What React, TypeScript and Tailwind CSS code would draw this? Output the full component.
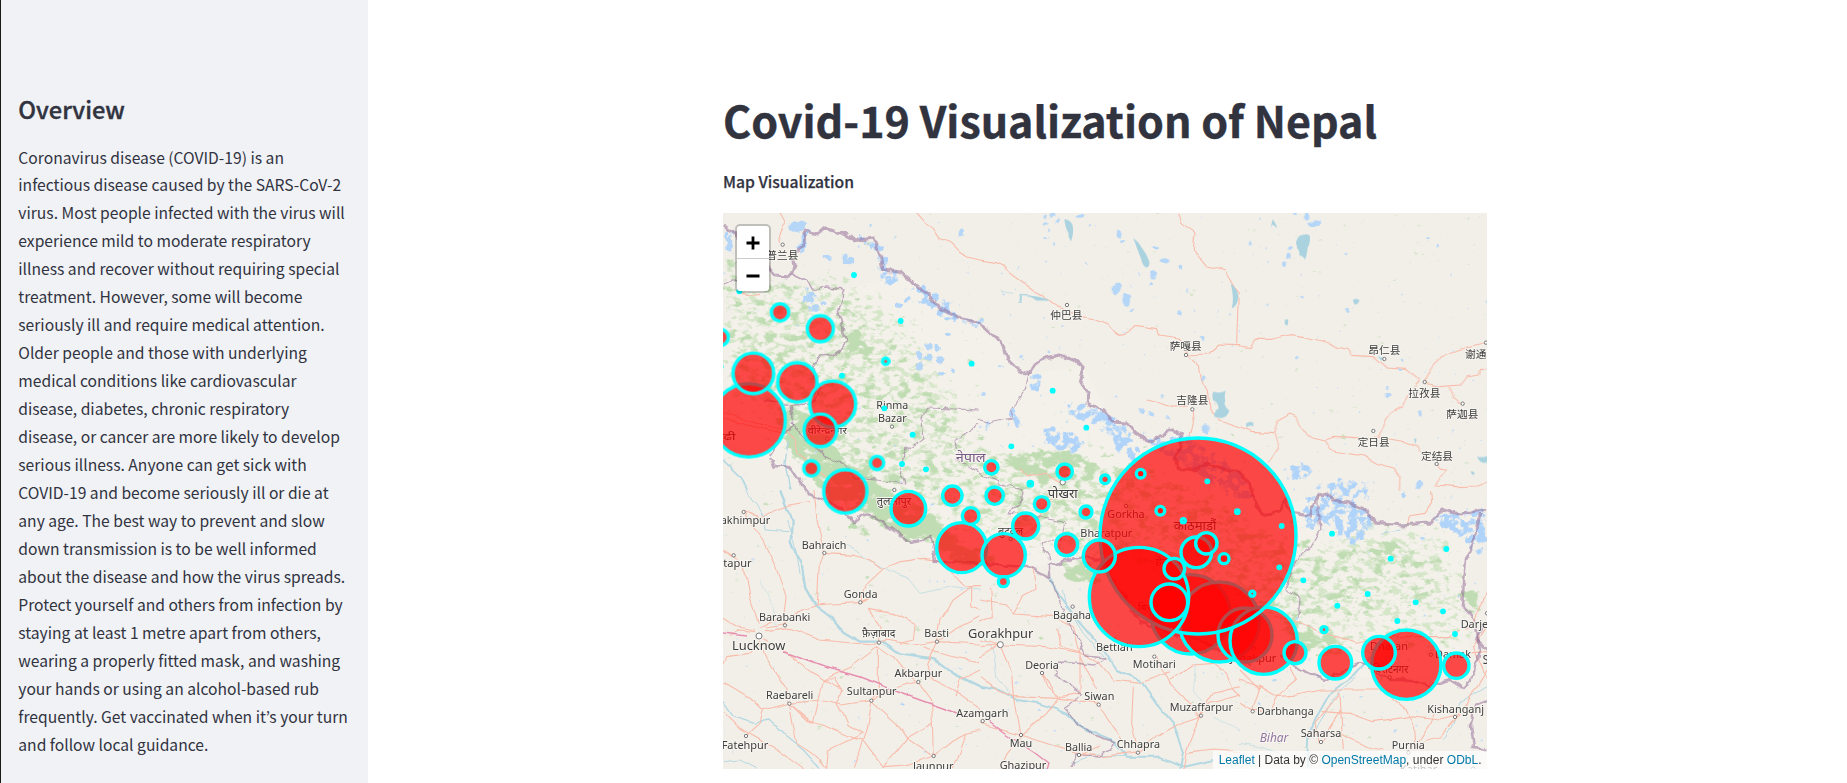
import React from "react";

const OVERVIEW = [
  "Coronavirus disease (COVID-19) is an",
  "infectious disease caused by the SARS-CoV-2",
  "virus. Most people infected with the virus will",
  "experience mild to moderate respiratory",
  "illness and recover without requiring special",
  "treatment. However, some will become",
  "seriously ill and require medical attention.",
  "Older people and those with underlying",
  "medical conditions like cardiovascular",
  "disease, diabetes, chronic respiratory",
  "disease, or cancer are more likely to develop",
  "serious illness. Anyone can get sick with",
  "COVID-19 and become seriously ill or die at",
  "any age. The best way to prevent and slow",
  "down transmission is to be well informed",
  "about the disease and how the virus spreads.",
  "Protect yourself and others from infection by",
  "staying at least 1 metre apart from others,",
  "wearing a properly fitted mask, and washing",
  "your hands or using an alcohol-based rub",
  "frequently. Get vaccinated when it’s your turn",
  "and follow local guidance.",
];

// Each tile has its own origin on the map and is drawn at three units per pixel.
type TileId = "A" | "B" | "C" | "D" | "E" | "F";
const TILES: Record<TileId, [number, number]> = {
  A: [720, 210], B: [980, 210], C: [1240, 210],
  D: [720, 490], E: [980, 490], F: [1240, 490],
};
const IDS: TileId[] = ["A", "B", "C", "D", "E", "F"];

const ROADS: Record<TileId, string[]> = {
  A: [
    "M180 8L195 35L178 70L182 98", "M590 8L618 40L640 55L660 85L690 98L720 128L745 142L780 150",
    "M9 605L60 625L110 640L200 660", "M200 660L225 685L235 730L280 770L320 800", "M9 625L80 645L190 670", "M60 250L90 255L120 250",
  ],
  B: [
    "M0 150L50 158L70 168L80 182L100 198L160 240L190 256L225 285L260 300L300 322L350 330L385 345L410 376L430 374L468 346L530 356L535 375L600 384L620 405L618 432",
    "M593 8L605 40L645 68L640 120L680 170L735 182L755 215L775 250L770 400", "M618 435L685 432L720 402L780 404",
    "M622 440L655 470L662 510L685 540L690 600L720 630L780 650", "M500 570L545 580L575 592L620 585", "M637 600L640 640L630 680",
    "M120 770L140 800L200 790L250 820",
  ],
  C: [
    "M0 405L30 410L45 388L95 388L150 374L195 380L270 400L290 412L325 418L335 436L400 440L440 474L500 478L540 514",
    "M555 516L570 485L585 458L605 440L640 425L660 418L720 405L741 398", "M555 520L600 530L660 525L680 498L715 492L720 475L741 476",
    "M540 516L498 560L485 590L450 612L435 640L415 680", "M630 530L640 562L665 580",
    "M0 650L30 664L102 668L115 632L150 612L168 620L180 650L215 680L255 690L280 682L345 686L430 684L500 696L530 708L540 725",
    "M255 690L272 720L320 730L370 738L410 760L460 775L480 800L478 840", "M102 670L115 715L85 760", "M590 765L602 778L620 780L585 825L650 830L710 828L741 816",
  ],
  D: [
    "M75 65L95 105L130 150L165 220L198 322L190 380L120 415", "M75 65L120 80L165 62L210 45L270 35",
    "M282 0L290 80L310 188L298 220L292 344", "M312 190L400 196L450 210L485 238L540 215L610 205L660 212",
    "M285 345L330 342L420 338L470 310L420 334", "M420 338L440 280L485 238", "M135 415L190 405L240 360L285 345",
    "M135 425L210 415L300 450L460 465L500 450L580 465L650 455L780 462", "M9 385L50 410L105 420", "M105 425L60 420L30 440",
    "M10 180L50 210L80 260L90 320L115 400", "M118 455L140 505L165 545L195 590L208 640L218 700L230 760L290 800L320 836",
    "M130 450L190 480L240 520L310 570L370 600", "M310 570L395 530L475 470L475 600L455 630", "M118 460L90 490L20 500L9 525",
    "M9 575L60 605L100 630L130 660L208 640L300 630L360 645L455 632", "M130 660L120 700L78 738", "M9 665L60 715L120 750L200 800L250 836",
    "M310 570L280 700L208 640", "M310 572L345 565L365 600L345 645L370 670L385 705L430 730", "M208 640L260 690L320 710L400 745L430 750L490 830L560 825L640 798",
    "M455 632L442 720L400 836", "M455 632L530 700L560 745L640 798", "M455 632L520 595L595 575L635 630L637 700L640 798", "M637 700L560 745L490 830",
    "M475 470L520 500L560 550L595 575", "M650 455L620 520L640 570L700 600L780 655", "M610 470L660 490L720 505L780 515",
    "M445 358L520 370L585 405L580 450L540 460", "M445 358L480 410L478 460", "M690 250L740 290L780 290", "M755 290L755 350L780 360",
    "M755 290L700 330L660 390L650 450", "M780 540L720 570L705 620", "M740 730L720 790L700 836", "M640 798L700 750L740 730L780 720",
    "M320 836L325 780L430 730", "M650 455L700 420L780 380",
  ],
  E: [
    "M0 330L80 345L100 372L220 380L280 410L300 490", "M35 290L40 380L0 400", "M160 230L165 300L130 320L100 372",
    "M60 465L200 470L300 488L360 520L400 570L480 580L530 560L570 545", "M60 465L95 550L100 620L120 735", "M60 465L0 450", "M0 470L60 465L0 500",
    "M185 550L235 625L360 640", "M185 550L200 590L240 620L300 610L300 490", "M360 645L400 710L430 750", "M240 620L200 670L125 735L80 790L60 836",
    "M100 620L235 625", "M460 590L455 700L475 785", "M475 785L530 740L600 700L660 680", "M530 500L570 580L610 620L655 675",
    "M660 680L620 780L610 836", "M655 680L700 610L780 590", "M570 570L620 540L640 525L700 520", "M230 415L240 470L300 485",
    "M660 670L690 640L780 615", "M120 735L170 750L300 795L360 765", "M0 560L50 600L100 620", "M290 790L370 800L470 785",
    "M700 520L740 550L760 600L780 620", "M120 140L170 110L190 50L240 10", "M120 735L0 700", "M620 790L700 780L780 785", "M350 600L300 500",
  ],
  F: [
    "M500 100L505 78L555 70L575 40L572 0", "M100 380L180 400L240 425L290 440L350 460L440 440L620 440L660 420",
    "M0 570L60 590L110 620L170 615L240 600L340 600L450 600", "M110 620L90 660L38 662", "M38 662L60 590", "M235 760L225 700L300 610L305 710L310 780",
    "M245 665L330 670L400 695L510 680L600 690L640 680", "M245 755L270 710L305 660", "M440 610L500 660L520 700L525 770", "M600 640L650 680L680 640L741 540",
    "M525 770L560 750L600 740L650 680", "M0 540L40 580L60 600", "M680 420L720 360L741 300", "M741 410L700 470L741 570", "M660 490L741 485",
    "M300 730L380 770L430 780", "M150 530L170 570L110 620", "M0 640L38 662", "M590 650L570 700L525 770",
  ],
};

const RIVERS: Record<TileId, [string, number][]> = {
  A: [["M9 750L60 800L85 840", 5], ["M205 690L195 760L210 840", 4], ["M120 560L170 590L200 600", 2]],
  B: [["M115 256L150 258L205 270", 4], ["M120 256L118 282", 7], ["M60 244L100 250", 2]],
  C: [],
  D: [
    ["M180 0L215 90L212 160L245 220L255 290L290 350L330 380L370 425L420 455L490 455L540 490L640 505L700 550L780 590", 7],
    ["M200 90L228 180L240 250L270 320", 3], ["M80 0L130 80L135 120L205 125", 3], ["M9 635L40 680L100 700L150 690L200 740L250 780L300 836", 4],
    ["M9 815L60 810L110 836", 3], ["M370 160L430 200L480 230L560 260L600 310L700 290L780 300", 2], ["M120 270L160 350L170 420", 1.5],
  ],
  E: [
    ["M205 260L240 320L300 400L370 480L410 540L480 570L530 640L580 700L610 780L600 836", 6], ["M250 300L260 350L310 430L380 510", 3],
    ["M0 590L60 600L110 630L180 640L260 670L320 720L400 755L440 800L540 800L610 830L700 810", 6], ["M0 430L40 480L50 560L90 610", 2],
    ["M270 820L340 795L440 800", 3], ["M650 520L640 600L700 680L780 720", 1.5],
  ],
  F: [["M390 500L340 555L270 610L230 680L205 740L200 836", 6], ["M345 560L280 625L245 690L215 740", 3], ["M741 590L660 640L640 700L610 750", 3], ["M0 760L60 770L120 790", 2], ["M480 120L420 130", 3]],
};

const LAKES: Record<TileId, string[]> = {
  A: [],
  B: ["M253 28Q272 30 278 46Q282 70 273 94Q264 82 265 68Q256 54 253 28Z", "M460 84Q475 94 485 112Q500 132 508 154Q510 172 498 173Q486 164 484 148Q472 118 460 84Z", "M700 545Q720 552 737 542Q732 560 736 572Q728 586 748 602Q742 624 722 624L702 620Q704 600 716 596Q714 574 700 572Q694 556 700 545Z", "M752 220Q776 240 775 262Q772 290 755 294Q764 266 752 220Z", "M150 258Q190 260 208 272L170 272Z"],
  C: ["M168 98Q172 76 190 74Q212 70 210 84Q210 104 203 112Q200 140 195 149Q186 134 178 137Q180 122 172 116Z", "M92 52L98 28Q104 34 112 54L98 44Z", "M134 330L145 328L143 346L135 344Z", "M338 270Q352 262 358 272Q354 284 344 284Z", "M18 640Q30 632 40 638L40 650Q30 642 20 652Z", "M710 740Q726 744 741 738L741 758Q728 760 720 754Z", "M412 438L430 444L424 452Z", "M692 784Q704 782 704 794L696 794Z", "M522 684L530 688L526 702Z"],
  D: [], E: [], F: [],
};

const PONDS: Record<TileId, [number, number, number, number][]> = {
  A: [[230, 50, 22, 14], [245, 40, 10, 8], [320, 142, 9, 6], [385, 155, 18, 12], [375, 142, 8, 10], [540, 285, 9, 8], [562, 268, 7, 10], [682, 370, 8, 5], [600, 435, 12, 15], [625, 410, 10, 8], [650, 415, 9, 14], [662, 448, 14, 12], [600, 468, 12, 10], [625, 442, 10, 8], [663, 493, 10, 7], [698, 484, 6, 9], [725, 67, 7, 15], [452, 45, 4, 3], [30, 100, 10, 25], [308, 280, 8, 6], [286, 296, 12, 8], [262, 268, 12, 9]],
  B: [[195, 20, 5, 6], [216, 15, 8, 6], [234, 30, 6, 6], [200, 42, 5, 5], [207, 63, 5, 5], [198, 87, 4, 4], [223, 102, 4, 5], [300, 17, 10, 6], [418, 73, 10, 12], [430, 95, 8, 4], [526, 115, 8, 5], [555, 150, 16, 8], [600, 170, 9, 6], [521, 195, 7, 14], [510, 224, 6, 5], [410, 234, 16, 16], [440, 272, 13, 18], [457, 300, 6, 5], [622, 243, 4, 5], [600, 306, 8, 6], [665, 384, 6, 7], [668, 506, 5, 7], [320, 160, 3, 3], [486, 600, 6, 6], [514, 612, 11, 6], [547, 558, 4, 5], [568, 626, 4, 4], [62, 467, 5, 5], [122, 440, 6, 6], [247, 348, 3, 3], [752, 315, 4, 5], [205, 425, 5, 5], [8, 552, 6, 6], [678, 660, 10, 14]],
  C: [[200, 22, 8, 8], [222, 40, 18, 9], [160, 10, 8, 4], [565, 85, 5, 4], [148, 117, 7, 6], [145, 137, 7, 9], [132, 163, 6, 12], [320, 300, 6, 6], [28, 105, 5, 5], [172, 446, 5, 5], [440, 534, 5, 6], [447, 558, 7, 7], [542, 612, 6, 8], [222, 605, 3, 3], [480, 480, 8, 3], [738, 275, 3, 6], [540, 825, 12, 14]],
  D: [], E: [[180, 660, 3, 3]],
  F: [[550, 145, 8, 4], [490, 15, 8, 12]],
};

const BORDERS: [string, number][] = [
  ["M723 225L738 236L745 250L765 262L774 276L790 277L794 266L792 256L805 245L804 231L818 234L825 228L843 234L858 240L874 238L880 256L883 270L900 272L915 285L930 295L937 305L958 318L980 323L992 334L1004 345L1008 360L1018 370L1029 374L1035 365L1045 358L1060 355L1076 361L1083 366L1080 380L1088 392L1087 404L1104 410L1113 422L1127 423L1138 435L1150 440L1162 437L1170 429L1182 434L1180 446L1175 460L1178 468L1195 470L1208 463L1225 470L1240 470L1252 490L1260 515L1280 512L1285 500L1290 512L1310 515L1318 494L1327 493L1334 500L1350 503L1366 510L1375 522L1400 525L1430 523L1443 510L1460 514L1472 513L1487 510", 2.5],
  ["M1480 514L1476 535L1466 560L1462 605L1475 620L1480 650L1474 675L1463 688L1450 680L1430 685L1405 680L1390 680L1376 672L1360 662L1345 670L1325 680L1300 670L1280 655", 2],
  ["M769 458L775 466L790 467L800 482L810 495L823 500L835 504L855 522L860 514L875 517L893 530L910 542L932 538L936 562L970 562L995 565L1028 567L1050 577L1050 566L1075 558L1100 560L1120 590L1140 622L1170 632L1200 640L1250 665", 2],
  ["M1487 623L1476 640L1487 650M1487 700L1475 705L1471 725L1474 748L1487 750", 2],
  ["M1050 577L1055 590L1062 606L1068 625L1080 640L1085 656L1105 658L1095 665L1060 662L1055 675L1070 685L1082 695L1065 707L1075 722L1095 735L1115 742L1100 757L1075 755L1072 769", 1.1],
  ["M723 285L735 280L760 290", 1.2],
  ["M792 274L808 282L812 290L825 288L844 290L838 310L842 323L846 342L836 354L820 355L814 366L815 380L820 390L812 404L790 405L765 400M790 405L793 425L780 440L770 456", 1.3],
  ["M978 425L955 440L958 460L978 473M978 410L928 408L920 420L922 440L906 450L901 470L905 484L885 481L855 478L850 468L825 456L805 438L790 422", 1],
  ["M1029 374L1025 390L1012 410L1012 418L990 423L975 420M978 473L1005 485L1022 490L1020 505L1008 513L1048 518L1065 522L1062 538L1040 545L1052 560", 1],
  ["M1318 494L1318 510L1320 530L1310 548L1295 560L1285 590L1300 598L1298 618", 1.1],
];

type Circle = [number, number, number];
const CIRCLES: [TileId, Circle[]][] = [
  ["A", [[86, 631, 110], [0, 382, 25], [100, 490, 61], [180, 307, 26], [301, 356, 39], [232, 517, 59], [338, 582, 69], [301, 661, 49], [274, 775, 23], [471, 759, 20], [376, 844, 65], [497, 454, 9.5]]],
  ["B", [[34, 772, 20], [254, 785, 23], [375, 808, 13], [151, 821, 6.5]]],
  ["D", [[565, 56, 52], [697, 17, 29], [725, 173, 75], [752, 78, 25]]],
  ["E", [[71, 196, 65], [44, 17, 26], [137, 108, 39], [185, 42, 22], [70, 275, 15], [260, 164, 33], [318, 66, 18], [632, 373, 119], [718, 396, 120], [795, 435, 81]]],
  ["F", [[71, 452, 101]]],
  ["E", [[654, 138, 294], [477, 321, 149], [358, 198, 48], [541, 62, 13], [610, 92, 6], [772, 65, 5], [649, 187, 46], [679, 160, 32], [732, 206, 15], [583, 236, 31], [568, 337, 55]]],
  ["B", [[482, 791, 13]]],
  ["F", [[165, 488, 33], [286, 518, 49], [499, 524, 104], [417, 488, 49], [649, 527, 38], [37, 311, 7.5], [252, 419, 9]]],
];

const DOTS: Record<TileId, [number, number][]> = {
  A: [[402, 195], [542, 333], [755, 461], [366, 497], [493, 595], [578, 674], [546, 762], [618, 778], [58, 244], [2, 470]],
  B: [[218, 542], [319, 653], [94, 709], [682, 814]],
  C: [], D: [], E: [],
  F: [[125, 108], [276, 131], [452, 206], [619, 177], [118, 232], [190, 271], [383, 312], [292, 347], [527, 337], [609, 364], [472, 393], [645, 432]],
};

// centre x, baseline y, text, drawn width, font size, optional colour
type Label = [number, number, string, number, number, string?];
const LABELS: Record<TileId, Label[]> = {
  A: [[187, 148, "普兰县", 96, 32], [517, 598, "Rinma", 96, 33], [517, 637, "Bazar", 86, 33], [322, 671, "वीरेन्द्रनगर", 118, 29], [16, 690, "गढी", 62, 29], [752, 757, "नेपाल", 90, 40, "#7a5a86"]],
  B: [[259, 328, "仲巴县", 96, 32], [617, 421, "萨嘎县", 96, 32], [637, 583, "吉隆县", 96, 32]],
  C: [[433, 433, "昂仁县", 96, 32], [723, 444, "谢通门", 96, 32], [553, 560, "拉孜县", 96, 32], [667, 625, "萨迦县", 96, 32], [401, 707, "定日县", 96, 32], [591, 749, "定结县", 96, 32]],
  D: [[68, 102, "Lakhimpur", 166, 33], [39, 232, "Sitapur", 112, 33], [312, 176, "Bahraich", 134, 33], [522, 46, "तुलसीपुर", 104, 32], [422, 324, "Gonda", 102, 33], [194, 392, "Barabanki", 154, 33], [116, 479, "Lucknow", 160, 38], [476, 442, "फ़ैज़ाबाद", 100, 34], [650, 440, "Basti", 74, 33], [595, 562, "Akbarpur", 143, 33], [455, 615, "Sultanpur", 149, 33], [209, 628, "Raebareli", 142, 33], [75, 777, "Fatehpur", 140, 33], [787, 680, "Azamgarh", 156, 33], [640, 840, "Jaunpur", 122, 33]],
  E: [[248, 25, "पोखरा", 90, 36], [438, 84, "Gorkha", 112, 33], [379, 140, "Bharatpur", 156, 33], [92, 135, "बुटवल", 76, 31], [645, 120, "काठमाडौं", 128, 37], [565, 224, "हेटौंडा", 78, 29], [515, 362, "बिरगंज", 84, 30], [276, 388, "Bagaha", 114, 33], [403, 483, "Bettiah", 110, 33], [523, 535, "Motihari", 129, 33], [62, 444, "Gorakhpur", 196, 38], [186, 536, "Deoria", 101, 33], [358, 629, "Siwan", 90, 33], [664, 662, "Muzaffarpur", 190, 33], [123, 771, "Mau", 68, 33], [296, 783, "Ballia", 82, 33], [475, 775, "Chhapra", 130, 33], [129, 837, "Ghazipur", 140, 33]],
  F: [[40, 515, "Janakpur", 138, 33], [447, 480, "Dharan", 114, 33], [452, 550, "विराटनगर", 106, 31], [639, 503, "Damak", 108, 33], [741, 413, "Darjeeling", 158, 33], [778, 521, "Siliguri", 100, 38], [136, 675, "Darbhanga", 170, 33], [102, 755, "Bihar", 86, 36, "#9277a0"], [243, 742, "Saharsa", 122, 33], [505, 776, "Purnia", 99, 33], [647, 668, "Kishanganj", 170, 33], [536, 850, "Katihar", 112, 33]],
};

const TOWNS: Record<TileId, [number, number, number?][]> = {
  A: [[188, 104], [516, 650], [322, 686]],
  B: [[261, 285], [618, 435], [637, 598], [248, 817, 8]],
  C: [[433, 447], [554, 516], [668, 581], [400, 663], [590, 762], [738, 398]],
  D: [[71, 66], [41, 196], [313, 189], [523, 0], [421, 337], [195, 406], [117, 438, 9], [477, 458], [651, 455], [595, 576], [454, 632], [208, 641], [78, 738], [641, 798]],
  E: [[438, 48], [278, 350], [403, 449], [523, 500], [61, 464, 9], [186, 549], [356, 644], [663, 677], [8, 693], [123, 735], [297, 795], [474, 788], [92, 147]],
  F: [[42, 475], [573, 494], [449, 562], [38, 664], [243, 756], [505, 788], [645, 681], [741, 370], [700, 836]],
};

const toTile = (id: TileId) => `translate(${TILES[id][0]} ${TILES[id][1]}) scale(0.333333)`;

function Patches({ id, freq, seed, colour, spread }: { id: string; freq: string; seed: number; colour: string; spread: number }) {
  return (
    <filter id={id} filterUnits="userSpaceOnUse" x="700" y="190" width="810" height="600" colorInterpolationFilters="sRGB">
      <feTurbulence type="fractalNoise" baseFrequency={freq} numOctaves={4} seed={seed} />
      <feColorMatrix type="matrix" values="0 0 0 0 0  0 0 0 0 0  0 0 0 0 0  1 0 0 0 0" result="noise" />
      <feGaussianBlur in="SourceAlpha" stdDeviation={spread} result="area" />
      <feComposite in="noise" in2="area" operator="arithmetic" k1={0} k2={1} k3={0.6} k4={0} />
      <feComponentTransfer result="mask"><feFuncA type="linear" slope={7} intercept={-5.5} /></feComponentTransfer>
      <feFlood floodColor={colour} />
      <feComposite in2="mask" operator="in" />
    </filter>
  );
}

function NepalMap() {
  return (
    <svg className="block h-[556px] w-[764px]" viewBox="723 213 764 556">
      <defs>
        <Patches id="woods" freq="0.08 0.12" seed={7} colour="#c0dcb2" spread={4} />
        <Patches id="scrub" freq="0.12 0.18" seed={21} colour="#d6e6c9" spread={8} />
        <Patches id="ice" freq="0.14 0.14" seed={4} colour="#afd3f9" spread={2.5} />
        <filter id="wiggle" filterUnits="userSpaceOnUse" x="700" y="190" width="810" height="600">
          <feTurbulence type="fractalNoise" baseFrequency="0.11" numOctaves={2} seed={3} />
          <feDisplacementMap in="SourceGraphic" scale={7} xChannelSelector="R" yChannelSelector="G" />
        </filter>
        <filter id="bend" filterUnits="userSpaceOnUse" x="700" y="190" width="810" height="600">
          <feTurbulence type="fractalNoise" baseFrequency="0.07" numOctaves={1} seed={9} />
          <feDisplacementMap in="SourceGraphic" scale={6} xChannelSelector="R" yChannelSelector="G" />
        </filter>
      </defs>
      <rect x="723" y="213" width="764" height="556" fill="#f2efe9" />
      <path fill="#f3f1ea" d="M735 290L800 288L844 290L900 275L937 305L1004 345L1029 374L1083 366L1113 422L1178 468L1252 490L1260 515L1318 494L1375 522L1480 514L1462 605L1474 675L1390 680L1250 665L1120 590L1050 566L936 562L860 514L775 466L723 440Z" />

      <g filter="url(#scrub)">
        <path opacity="0.46" d="M723 265L760 285L840 275L870 290L900 310L940 360L960 400L975 440L1000 455L1110 460L1170 480L1260 520L1300 560L1350 520L1450 530L1470 580L1470 650L1330 640L1240 590L1110 560L1000 545L880 500L780 420L723 400Z" />
      </g>
      <g filter="url(#woods)">
        <path opacity="0.4" d="M723 250L800 290L850 280L890 340L930 380L960 430L1000 450L1100 450L1180 480L1260 530L1340 540L1440 545L1450 600L1330 630L1200 590L1060 540L950 510L860 480L780 420L723 370Z" />
        <path opacity="0.9" d="M784 408L812 420L850 466L905 500L935 514L960 540L1000 558L980 566L940 558L935 542L905 541L870 518L830 502L798 462L776 432Z" />
        <path opacity="0.62" d="M840 338L862 335L872 352L848 362ZM1003 455L1035 447L1090 458L1095 478L1040 478L1010 470ZM1370 545L1395 538L1400 550L1375 560ZM1458 585L1484 590L1480 612L1465 612ZM1270 610L1340 638L1345 655L1320 655L1290 635Z" />
        <path opacity="0.42" d="M1240 610L1330 635L1440 640L1460 625L1475 650L1400 652L1290 650Z" />
        <path opacity="0.9" d="M1054 568L1090 562L1110 584L1076 582ZM850 522L868 527L864 541L852 530ZM880 617L895 614L896 622L884 624ZM872 571L888 582L882 584ZM842 515L856 518L850 528ZM1372 546L1392 540L1396 548L1378 556ZM1462 590L1482 594L1476 606L1466 608Z" />
      </g>
      <g filter="url(#ice)">
        <path opacity="0.66" d="M800 235L810 225L810 245L795 258ZM850 234L878 240L882 262L872 252ZM880 242L900 280L885 290L876 262ZM905 280L935 290L960 315L985 320L980 328L940 318L920 300Z" />
        <path opacity="0.7" d="M1030 370L1042 375L1040 390L1028 392ZM1010 405L1018 410L1020 430L1010 428ZM1043 425L1070 430L1090 446L1070 454L1043 448ZM1070 400L1090 405L1115 415L1128 430L1115 440L1095 425L1068 415ZM1110 435L1130 432L1142 455L1130 462L1115 450ZM1055 418L1070 410L1072 420Z" />
        <path opacity="0.66" d="M1280 468L1308 462L1312 478L1290 485ZM1318 480L1340 478L1370 485L1368 500L1345 495L1320 490ZM1303 495L1345 496L1375 518L1370 537L1350 547L1335 530L1320 520L1316 537L1303 525ZM1430 513L1487 510L1487 557L1472 552L1463 537L1438 530ZM1140 440L1190 435L1250 480L1255 500L1235 500L1190 470Z" />
        <path opacity="0.55" d="M725 225L735 230L735 255L725 250ZM800 285L815 285L822 300L810 312ZM975 420L992 425L990 432L978 430Z" />
      </g>

      <g filter="url(#bend)">
        {IDS.map((id) => (
          <g key={id} transform={toTile(id)} fill="none" strokeLinejoin="round">
            {RIVERS[id].map(([d, w]) => <path key={d} d={d} stroke="#b4d8e2" strokeWidth={w} />)}
            {ROADS[id].map((d) => <path key={d} d={d} stroke="#f9bcaa" strokeWidth={3.3} />)}
          </g>
        ))}
        <g fill="none" stroke="#e78fb0" strokeWidth="1.4">
          <path d="M723 633L747 636M784 652L800 658L825 667L860 677L890 689L920 700L957 713M988 720L1003 732L1018 742L1035 753L1048 763L1046 770" />
        </g>
      </g>
      {IDS.map((id) => (
        <g key={id} transform={toTile(id)}>
          {LAKES[id].map((d) => <path key={d} d={d} fill="#aad3df" />)}
        </g>
      ))}
      <g filter="url(#wiggle)">
        {IDS.map((id) => (
          <g key={id} transform={toTile(id)} fill="#b5d6f7">
            {PONDS[id].map(([x, y, rx, ry]) => <ellipse key={`${x}-${y}`} cx={x} cy={y} rx={rx} ry={ry} />)}
          </g>
        ))}
        <g fill="none" stroke="#8d618f" strokeOpacity="0.5" strokeLinejoin="round">
          {BORDERS.map(([d, w]) => <path key={d} d={d} strokeWidth={w * 1.25} />)}
        </g>
      </g>

      {IDS.map((id) => (
        <g key={id} transform={toTile(id)}>
          {TOWNS[id].map(([x, y, r = 5]) => (
            <circle key={`${x}-${y}`} cx={x} cy={y} r={r} fill="#fff" stroke="#666" strokeWidth="2.6" />
          ))}
          {LABELS[id].map(([x, y, text, width, size, colour = "#3d3d3d"]) => (
            <text
              key={text}
              x={x}
              y={y}
              fontSize={size}
              textAnchor="middle"
              textLength={width}
              lengthAdjust="spacingAndGlyphs"
              fill={colour}
              stroke="#f7f5f0"
              strokeWidth="6"
              strokeLinejoin="round"
              paintOrder="stroke"
              fontStyle={text === "Bihar" ? "italic" : "normal"}
              className="font-['Noto_Sans','Noto_Sans_CJK_SC',sans-serif]"
            >
              {text}
            </text>
          ))}
        </g>
      ))}

      {CIRCLES.map(([id, list], i) => (
        <g key={i} transform={toTile(id)} fill="#ff0000" fillOpacity="0.7" stroke="#00ffff" strokeWidth="10.2">
          {list.map(([x, y, r]) => <circle key={`${x}-${y}`} cx={x} cy={y} r={r} />)}
        </g>
      ))}
      {IDS.map((id) => (
        <g key={id} transform={toTile(id)} fill="#00ffff">
          {DOTS[id].map(([x, y]) => <circle key={`${x}-${y}`} cx={x} cy={y} r="8.8" />)}
        </g>
      ))}
    </svg>
  );
}

function ZoomControl() {
  return (
    <div className="absolute left-[12px] top-[11px] w-[36px] overflow-hidden rounded-[5px] border-2 border-black/20 bg-white bg-clip-padding">
      <button className="flex h-[33px] w-full items-center justify-center border-b border-[#cccccc] pt-[2px]" aria-label="Zoom in">
        <svg className="h-[14px] w-[14px]" viewBox="0 0 14 14"><path d="M7 0.5V13.5M0.5 7H13.5" stroke="#000" strokeWidth="2.8" /></svg>
      </button>
      <button className="flex h-[32px] w-full items-center justify-center pt-[1px]" aria-label="Zoom out">
        <svg className="h-[14px] w-[14px]" viewBox="0 0 14 14"><path d="M0.5 7H13.5" stroke="#000" strokeWidth="2.8" /></svg>
      </button>
    </div>
  );
}

export default function App() {
  return (
    <div className="flex h-[783px] w-[1847px] overflow-hidden bg-white font-['Noto_Sans_CJK_KR',sans-serif] text-[#31333f]">
      <aside className="w-[368px] shrink-0 border-l border-[#1c1a17] bg-[#f0f2f6] pl-[17.3px] pt-[93px]">
        <h2 className="h-[32px] whitespace-nowrap text-[23.6px] font-medium leading-[32px] [-webkit-text-stroke:0.4px_#31333f]">Overview</h2>
        <p className="mt-[18.5px] whitespace-nowrap text-[15.65px] leading-[27.97px]">
          {OVERVIEW.map((line) => (
            <span key={line} className="block">{line}</span>
          ))}
        </p>
      </aside>
      <main className="flex flex-1 justify-center pr-[5px]">
        <div className="w-[764px] pt-[90px]">
          <h1 className="h-[58px] whitespace-nowrap text-[43px] font-bold leading-[58px] [-webkit-text-stroke:0.4px_#31333f]">Covid-19 Visualization of Nepal</h1>
          <h3 className="mt-[20px] h-[28px] whitespace-nowrap text-[15.7px] font-medium leading-[28px] [-webkit-text-stroke:0.25px_#31333f]">Map Visualization</h3>
          <div className="relative mt-[17px] h-[556px] w-[764px] overflow-hidden">
            <NepalMap />
            <ZoomControl />
            <div className="absolute bottom-0 right-0 h-[18px] whitespace-nowrap bg-white/70 px-[5.5px] font-['Liberation_Sans',sans-serif] text-[12px] leading-[18px] text-[#333333]">
              <a className="text-[#0078a8]">Leaflet</a> | Data by © <a className="text-[#0078a8]">OpenStreetMap</a>, under <a className="text-[#0078a8]">ODbL</a>.
            </div>
          </div>
        </div>
      </main>
    </div>
  );
}
